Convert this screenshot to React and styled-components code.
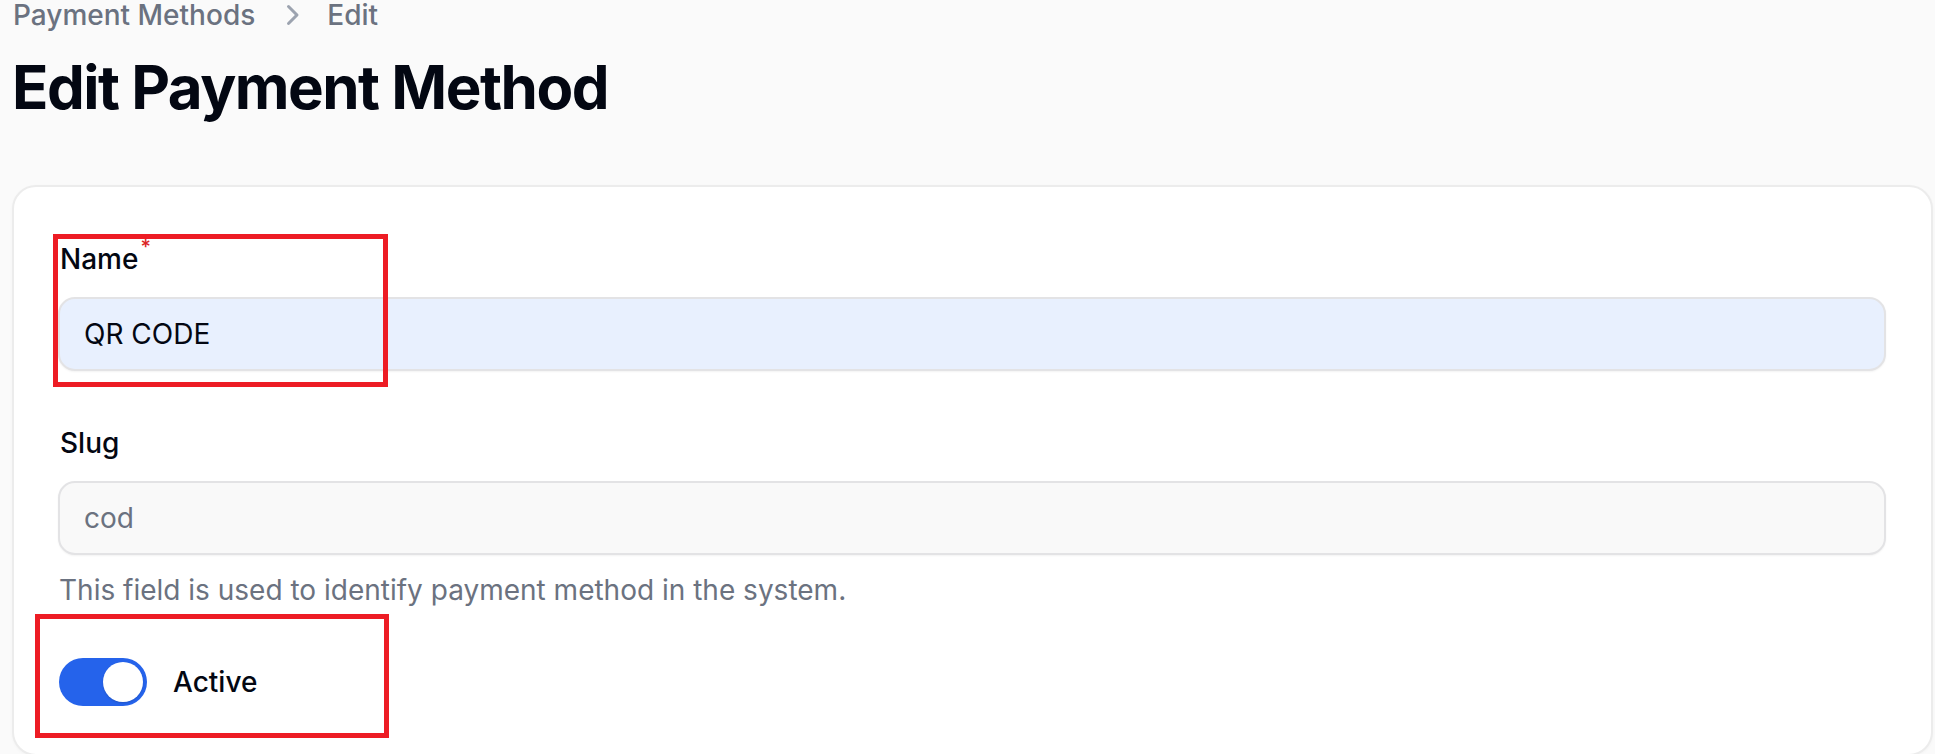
import React from "react";
import styled, { createGlobalStyle } from "styled-components";

const GlobalStyle = createGlobalStyle`
  html, body {
    margin: 0;
    padding: 0;
    background: #fafafa;
    font-family: Inter, "Noto Sans", "Liberation Sans", sans-serif;
    color: #030712;
    overflow: hidden;
  }
  * { box-sizing: border-box; }
`;

const Root = styled.div`
  position: relative;
  width: 1935px;
  height: 754px;
  overflow: hidden;
  padding: 0 2px 0 12px;
`;

const Header = styled.header`
  display: flex;
  flex-direction: column;
  gap: 16px;
  margin-top: -5px;
`;

const Breadcrumbs = styled.nav`
  display: flex;
  align-items: center;
  gap: 16px;
  height: 40px;
  padding-left: 1px;
`;

const Crumb = styled.span`
  font-size: 28px;
  line-height: 40px;
  font-weight: 500;
  color: #6b7280;
`;

const Chevron = styled.svg`
  width: 40px;
  height: 40px;
  color: #9ca3af;
`;

const Title = styled.h1`
  margin: 0;
  font-size: 60px;
  line-height: 72px;
  font-weight: 700;
  letter-spacing: -1.5px;
  color: #030712;
`;

const Card = styled.section`
  margin-top: 62px;
  width: 1921px;
  background: #ffffff;
  border: 2px solid #ececec;
  border-radius: 24px;
  box-shadow: 0 1px 3px rgba(0, 0, 0, 0.03);
  padding: 52px 45px 48px 44px;
  display: flex;
  flex-direction: column;
  gap: 48px;
`;

const Field = styled.div`
  display: flex;
  flex-direction: column;
  gap: ${(p) => p.$gap || 18}px;
  margin-bottom: ${(p) => p.$after || 0}px;
`;

const Label = styled.label`
  font-size: 28px;
  line-height: 40px;
  font-weight: 500;
  color: #030712;
  padding-left: 2px;
`;

const Required = styled.sup`
  color: #dc2626;
  font-weight: 500;
  font-size: 20px;
  margin-left: 2px;
  vertical-align: top;
  line-height: 20px;
  position: relative;
  top: -2px;
`;

const Input = styled.input`
  display: block;
  width: 100%;
  height: 74px;
  border: 2px solid #e3e3e5;
  border-radius: 17px;
  padding: 0 24px;
  font-family: inherit;
  font-size: 28px;
  color: ${(p) => (p.disabled ? "#6b7280" : "#030712")};
  -webkit-text-fill-color: ${(p) => (p.disabled ? "#6b7280" : "#030712")};
  background: ${(p) => (p.$autofill ? "#e8f0fe" : "#f9f9f9")};
  box-shadow: 0 1px 2px rgba(0, 0, 0, 0.05);
  outline: none;
`;

const Hint = styled.p`
  margin: -3px 0 0;
  font-size: 28px;
  line-height: 40px;
  color: #6b7280;
  padding-left: 1px;
`;

const ToggleRow = styled.div`
  display: flex;
  align-items: center;
  gap: 26px;
  padding-left: 1px;
`;

const Toggle = styled.button`
  position: relative;
  width: 88px;
  height: 48px;
  border: 4px solid transparent;
  border-radius: 999px;
  background: #2563eb;
  padding: 0;
  display: flex;
  justify-content: ${(p) => (p.$on ? "flex-end" : "flex-start")};
  align-items: center;
  cursor: pointer;
`;

const Knob = styled.span`
  width: 40px;
  height: 40px;
  border-radius: 50%;
  background: #ffffff;
  box-shadow: 0 1px 2px rgba(0, 0, 0, 0.15);
`;

const ToggleLabel = styled.span`
  font-size: 28px;
  line-height: 40px;
  font-weight: 500;
  color: #030712;
`;

const Annotation = styled.div`
  position: absolute;
  border: 5px solid #ed1c24;
  pointer-events: none;
  left: ${(p) => p.$x}px;
  top: ${(p) => p.$y}px;
  width: ${(p) => p.$w}px;
  height: ${(p) => p.$h}px;
`;

export default function App() {
  return (
    <>
      <GlobalStyle />
      <Root>
        <Header>
          <Breadcrumbs>
            <Crumb>Payment Methods</Crumb>
            <Chevron viewBox="0 0 20 20" fill="currentColor">
              <path
                fillRule="evenodd"
                d="M8.22 5.22a.75.75 0 0 1 1.06 0l4.25 4.25a.75.75 0 0 1 0 1.06l-4.25 4.25a.75.75 0 0 1-1.06-1.06L11.94 10 8.22 6.28a.75.75 0 0 1 0-1.06Z"
                clipRule="evenodd"
              />
            </Chevron>
            <Crumb>Edit</Crumb>
          </Breadcrumbs>
          <Title>Edit Payment Method</Title>
        </Header>

        <Card>
          <div>
            <Field $after={52}>
              <Label>
                Name<Required>*</Required>
              </Label>
              <Input $autofill defaultValue="QR CODE" />
            </Field>
            <Field>
              <Label>Slug</Label>
              <Input disabled defaultValue="cod" />
              <Hint>This field is used to identify payment method in the system.</Hint>
            </Field>
          </div>
          <ToggleRow>
            <Toggle $on type="button" aria-pressed="true">
              <Knob />
            </Toggle>
            <ToggleLabel>Active</ToggleLabel>
          </ToggleRow>
        </Card>

        <Annotation $x={53} $y={234} $w={335} $h={153} />
        <Annotation $x={35} $y={614} $w={354} $h={124} />
      </Root>
    </>
  );
}
